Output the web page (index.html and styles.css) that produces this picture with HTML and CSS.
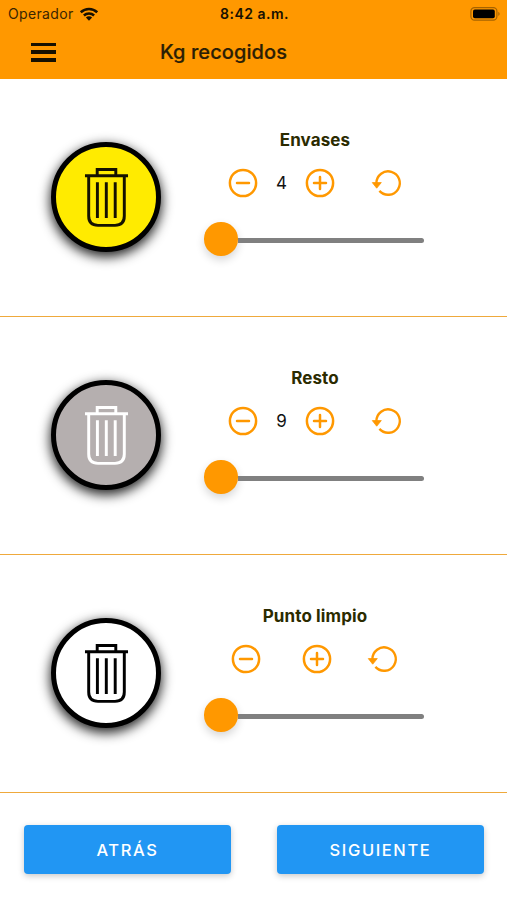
FILE: index.html
```html
<!DOCTYPE html>
<html lang="es">
<head>
<meta charset="utf-8">
<title>Kg recogidos</title>
<link rel="stylesheet" href="styles.css">
</head>
<body>
<svg class="defs" width="0" height="0" aria-hidden="true">
  <symbol id="bin" viewBox="0 0 46 62"><g fill="none" stroke="currentColor" stroke-width="3"><path d="M1 8.700H45M13.500 8V2.300H32.500V8M4.800 10V50Q4.800 59.500 14.300 59.500H31.700Q41.200 59.500 41.200 50V10M13.700 15.500V52M22.800 15.500V52M31.900 15.500V52"/></g></symbol>
  <symbol id="minus" viewBox="0 0 30 30"><g fill="none" stroke="currentColor" stroke-width="2.500"><circle cx="15" cy="15" r="13.100"/><path d="M9 15H21" stroke-linecap="round"/></g></symbol>
  <symbol id="plus" viewBox="0 0 30 30"><g fill="none" stroke="currentColor" stroke-width="2.500"><circle cx="15" cy="15" r="13.100"/><path d="M9 15H21M15 9V21" stroke-linecap="round"/></g></symbol>
  <symbol id="reset" viewBox="0 0 32 30"><path d="M5.400 15A11.700 11.700 0 1 1 8.400 22.900" fill="none" stroke="currentColor" stroke-width="2.400"/><path d="M1.300 14.600H10.300L5.700 20.200Z" fill="currentColor" stroke="currentColor" stroke-width=".8" stroke-linejoin="round"/></symbol>
</svg>
<header class="header">
  <div class="status">
    <div class="carrier"><span>Operador</span>
      <svg width="18" height="14" viewBox="0 0 18 14"><g fill="none" stroke="#171000" stroke-width="2.500"><path d="M.8 5.300A11.800 11.800 0 0 1 17.200 5.300M3.900 8.500A7.400 7.400 0 0 1 14.100 8.500"/></g><path d="M9 13.700L5.900 10.600A4.400 4.400 0 0 1 12.100 10.600Z" fill="#171000"/></svg>
    </div>
    <div class="clock">8:42 a.m.</div>
    <div class="battery"><svg width="31" height="14" viewBox="0 0 31 14"><rect x=".9" y=".6" width="26" height="12.600" rx="3.600" fill="none" stroke="#a66300" stroke-width="1.200"/><rect x="3" y="2.600" width="21.800" height="8.600" rx="1.800"/><path d="M28.300 4.700Q31 6.900 28.300 9.100Z" fill="#a66300"/></svg></div>
  </div>
  <div class="toolbar">
    <button class="menu" aria-label="Menú"><i></i><i></i><i></i></button>
    <h1>Kg recogidos</h1>
  </div>
</header>
<main>
  <section class="row">
    <div class="badge yellow"><svg><use href="#bin"/></svg></div>
    <div class="panel">
      <h2>Envases</h2>
      <div class="controls">
        <svg class="ic"><use href="#minus"/></svg><span class="value">4</span><svg class="ic"><use href="#plus"/></svg><svg class="ic reset"><use href="#reset"/></svg>
      </div>
      <div class="slider"><div class="knob"></div><div class="track"></div></div>
    </div>
  </section>
  <section class="row">
    <div class="badge gray"><svg><use href="#bin"/></svg></div>
    <div class="panel">
      <h2>Resto</h2>
      <div class="controls">
        <svg class="ic"><use href="#minus"/></svg><span class="value">9</span><svg class="ic"><use href="#plus"/></svg><svg class="ic reset"><use href="#reset"/></svg>
      </div>
      <div class="slider"><div class="knob"></div><div class="track"></div></div>
    </div>
  </section>
  <section class="row">
    <div class="badge white"><svg><use href="#bin"/></svg></div>
    <div class="panel">
      <h2>Punto limpio</h2>
      <div class="controls">
        <svg class="ic"><use href="#minus"/></svg><span class="value empty"></span><svg class="ic"><use href="#plus"/></svg><svg class="ic reset"><use href="#reset"/></svg>
      </div>
      <div class="slider"><div class="knob"></div><div class="track"></div></div>
    </div>
  </section>
</main>
<footer class="footer">
  <button class="btn">ATRÁS</button>
  <button class="btn">SIGUIENTE</button>
</footer>
</body>
</html>
```
FILE: styles.css
```css
* { box-sizing: border-box; }
body { margin: 0; height: 900px; overflow: hidden; background: #fff; color: #111; font-family: Inter, "Liberation Sans", sans-serif; }
.defs { position: absolute; }
svg { display: block; }
.header { height: 79px; background: #ff9800; color: #171000; }
.status { height: 26px; display: grid; grid-template-columns: 1fr auto 1fr; align-items: center; padding: 0 6px 0 8px; font-size: 14px; line-height: 27px; }
.carrier { display: flex; align-items: center; gap: 6px; color: #3a2500; letter-spacing: .35px; }
.clock { font-weight: 600; letter-spacing: .5px; }
.battery { justify-self: end; }
.toolbar { height: 52px; display: grid; grid-template-columns: 160px 1fr; align-items: center; }
.menu { width: 25px; height: 19px; margin: 0 0 0 31px; padding: 0; border: 0; background: none; display: flex; flex-direction: column; justify-content: space-between; }
.menu i { height: 3.500px; background: #171000; }
h1 { margin: 0; font-size: 20px; line-height: 26px; font-weight: 500; color: #2b1e05; letter-spacing: .08px; -webkit-text-stroke: .2px; }
.row { height: 238px; border-bottom: 1px solid #efa93c; display: grid; grid-template-columns: 203px 224px; }
.badge { width: 110px; height: 110px; margin: 63px 0 0 51px; border: 5px solid #000; border-radius: 50%; display: flex; justify-content: center; padding-top: 20px; box-shadow: 0 4px 12px 1px rgba(0,0,0,.85); }
.badge svg { width: 45px; height: 61px; }
.yellow { background: #ffeb00; color: #151200; }
.gray { background: #b5afaf; color: #fff; }
.white { background: #fff; color: #000; }
.panel { padding-top: 49px; }
h2 { margin: 0; text-align: center; font-size: 17px; line-height: 24px; font-weight: 650; letter-spacing: .12px; color: #2b2b00; }
.controls { height: 30px; margin-top: 16px; padding-left: .5px; display: flex; justify-content: center; align-items: center; color: #ff9800; }
.ic { width: 30px; height: 30px; flex: none; }
.ic.reset { width: 32px; margin-left: 35.500px; }
.value { width: 47px; text-align: center; color: #111; font-size: 17px; line-height: 24px; }
.value.empty { width: 40.500px; }
.slider { margin-top: 24px; padding: 0 3px 0 1px; display: flex; align-items: center; height: 34px; }
.knob { width: 33.500px; height: 33.500px; flex: none; border-radius: 50%; background: #ff9800; box-shadow: 0 4px 9px rgba(0,0,0,.16); }
.track { flex: 1; height: 5px; margin-top: 3px; border-radius: 0 3px 3px 0; background: #808080; }
.footer { display: grid; grid-template-columns: 207px 207px; column-gap: 46px; padding: 32px 0 0 24px; }
.btn { height: 49px; border: 0; border-radius: 4px; background: #2196f3; color: #fff; font: 500 16.500px/49px Inter, "Liberation Sans", sans-serif; letter-spacing: 1.600px; padding: 1px 0 0; box-shadow: 0 2px 6px rgba(0,0,0,.22); }
```
